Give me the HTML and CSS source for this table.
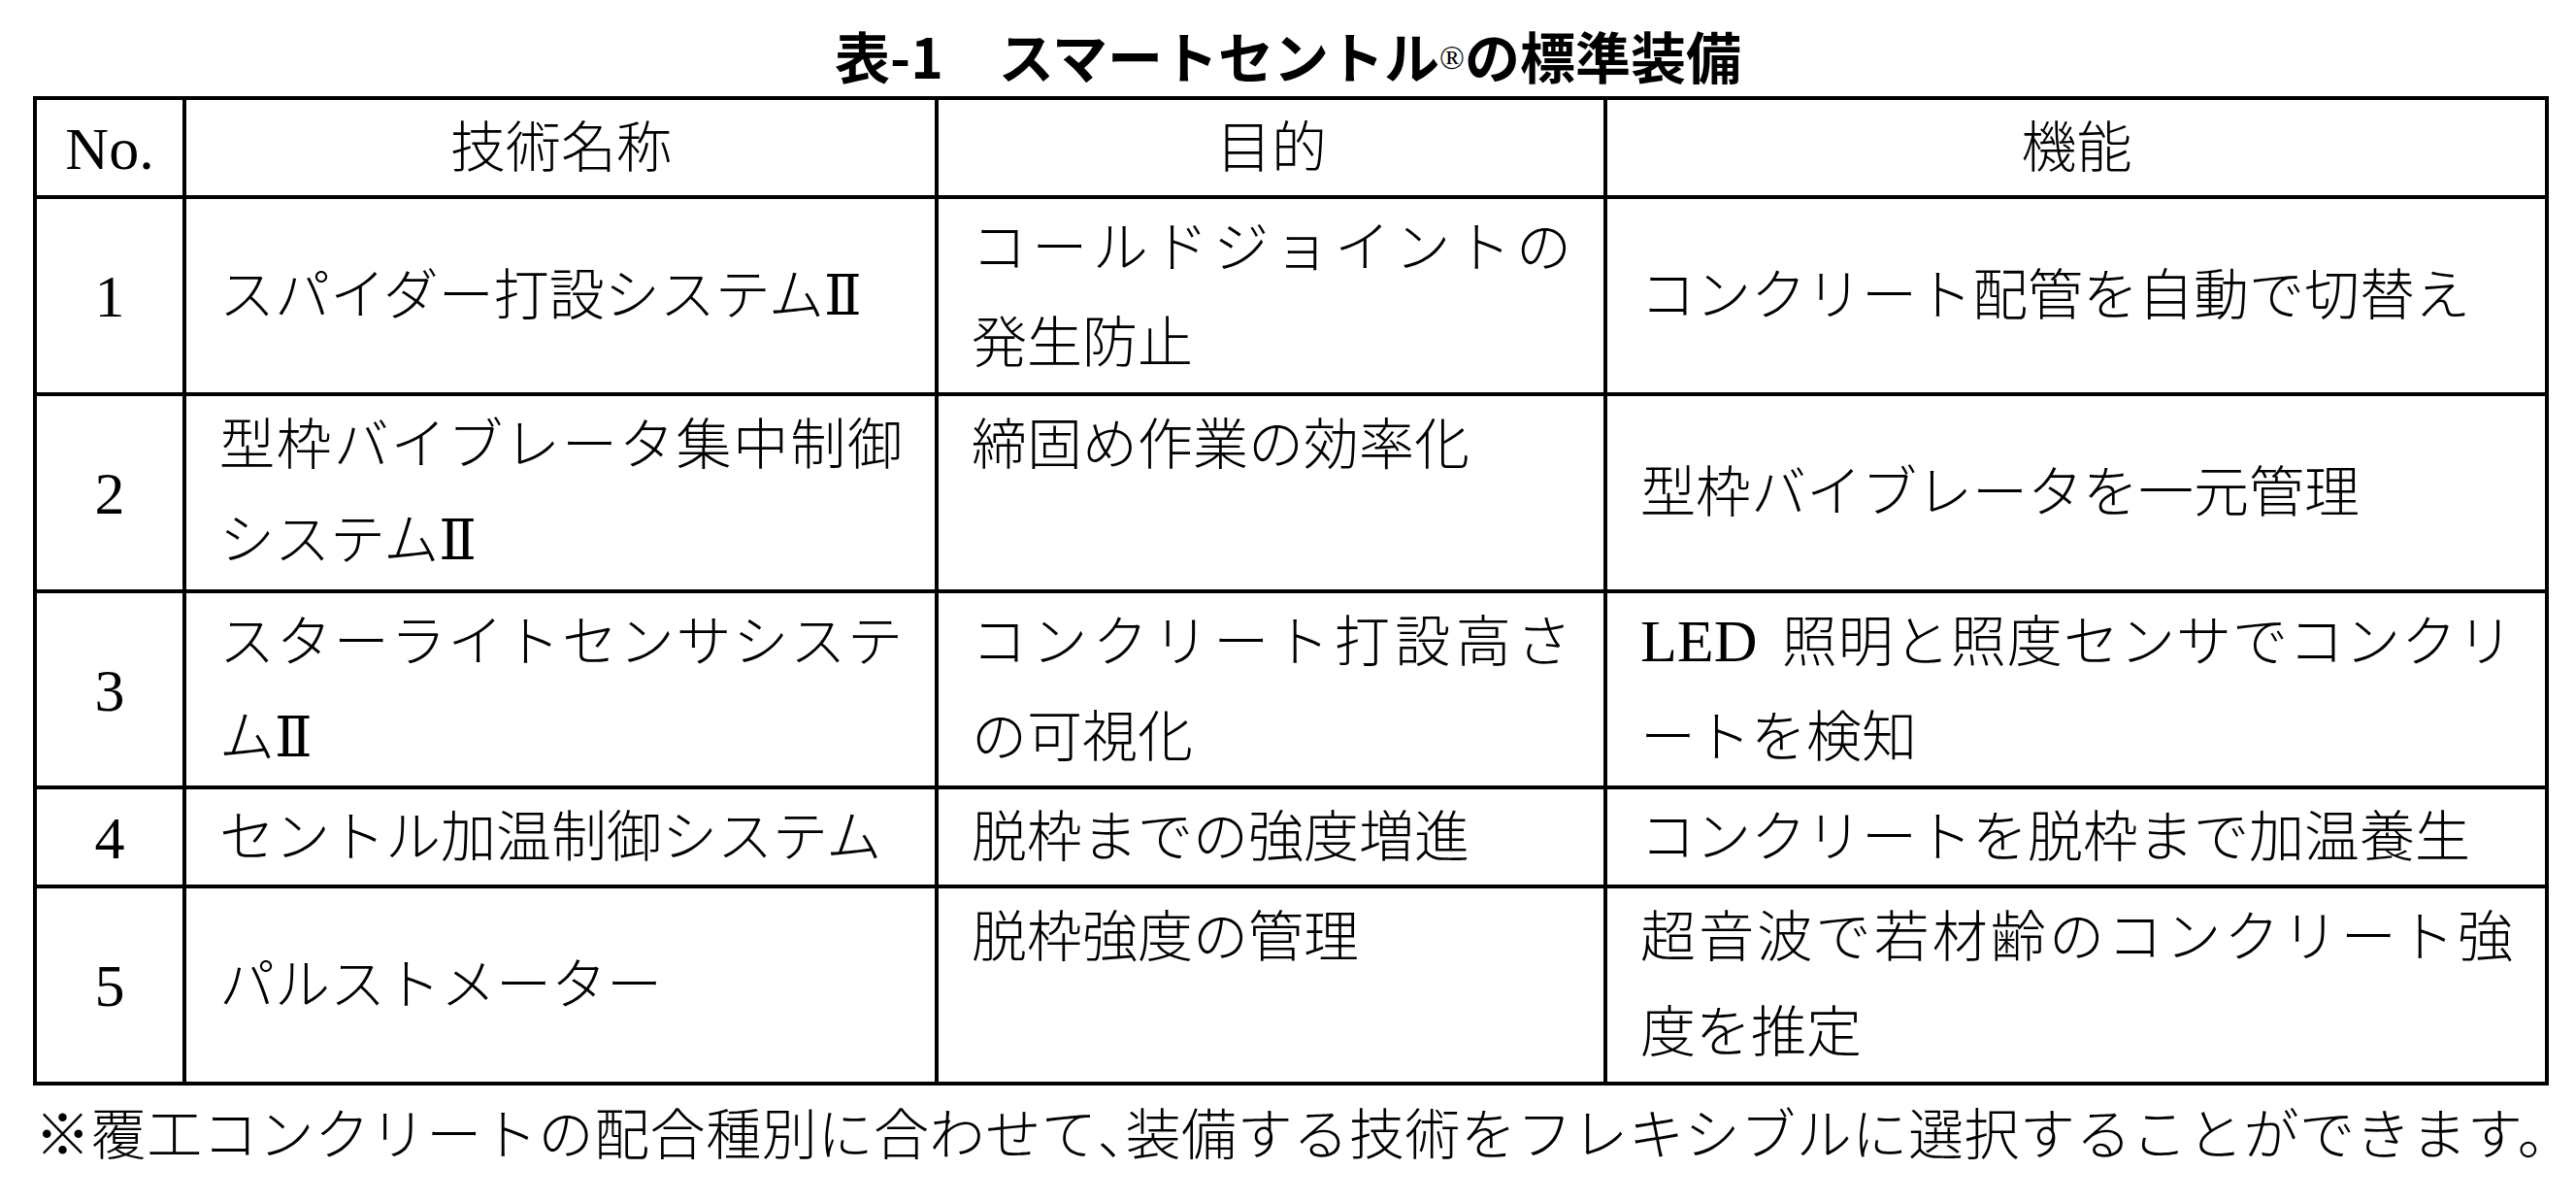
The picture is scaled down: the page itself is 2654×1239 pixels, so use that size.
FILE: index.html
```html
<!DOCTYPE html>
<html lang="ja">
<head>
<meta charset="utf-8">
<title>表-1 スマートセントルの標準装備</title>
<link rel="stylesheet" href="styles.css">
</head>
<body>
<main class="page">
  <h1 class="title">表-1　スマートセントル<span class="reg">®</span>の標準装備</h1>
  <div class="grid">
    <div class="cell head no"><div class="txt">No.</div></div>
    <div class="cell head"><div class="txt">技術名称</div></div>
    <div class="cell head"><div class="txt">目的</div></div>
    <div class="cell head"><div class="txt">機能</div></div>

    <div class="cell no"><div class="txt">1</div></div>
    <div class="cell"><div class="txt">スパイダー打設システムⅡ</div></div>
    <div class="cell"><div class="txt">コールドジョイントの発生防止</div></div>
    <div class="cell"><div class="txt">コンクリート配管を自動で切替え</div></div>

    <div class="cell no"><div class="txt">2</div></div>
    <div class="cell"><div class="txt">型枠バイブレータ集中制御システムⅡ</div></div>
    <div class="cell top"><div class="txt">締固め作業の効率化</div></div>
    <div class="cell"><div class="txt">型枠バイブレータを一元管理</div></div>

    <div class="cell no"><div class="txt">3</div></div>
    <div class="cell"><div class="txt">スターライトセンサシステムⅡ</div></div>
    <div class="cell"><div class="txt">コンクリート打設高さの可視化</div></div>
    <div class="cell"><div class="txt"><span class="lat">LED</span><span> 照明と照度センサでコンクリ</span><span>ートを検知</span></div></div>

    <div class="cell no"><div class="txt">4</div></div>
    <div class="cell"><div class="txt">セントル加温制御システム</div></div>
    <div class="cell"><div class="txt">脱枠までの強度増進</div></div>
    <div class="cell"><div class="txt">コンクリートを脱枠まで加温養生</div></div>

    <div class="cell no"><div class="txt">5</div></div>
    <div class="cell"><div class="txt">パルストメーター</div></div>
    <div class="cell top"><div class="txt">脱枠強度の管理</div></div>
    <div class="cell"><div class="txt">超音波で若材齢のコンクリート強度を推定</div></div>
  </div>
  <p class="note">※覆工コンクリートの配合種別に合わせて<span class="halt">、</span>装備する技術をフレキシブルに選択することができます。</p>
</main>
</body>
</html>
```

FILE: styles.css
```css
html, body {
  margin: 0;
  padding: 0;
  background: #ffffff;
  color: #000000;
}

.page {
  width: 2654px;
  font-family: "Liberation Serif", "Noto Sans CJK JP", sans-serif;
  font-weight: 300;
}

.title {
  margin: 0 0 11px 0;
  padding-top: 24px;
  font-family: "Noto Sans CJK JP", sans-serif;
  font-size: 57px;
  font-weight: 700;
  line-height: 64px;
  text-align: center;
  white-space: nowrap;
}

.title .reg {
  font-family: "Liberation Serif", serif;
  font-weight: 400;
  font-size: 34px;
  vertical-align: 10px;
  line-height: 1;
}

.grid {
  display: grid;
  grid-template-columns: 150px 771px 685px 966px;
  grid-template-rows: 98px 199px 199px 198px 98px 199px;
  gap: 4px;
  padding: 4px;
  margin-left: 34px;
  width: max-content;
  background: #000000;
}

.cell {
  background: #ffffff;
  display: flex;
  flex-direction: column;
  justify-content: center;
  padding: 1px 33px 0 34px;
  font-family: "Liberation Serif", "DejaVu Serif", "Noto Sans CJK JP", serif;
  font-size: 57px;
  line-height: 98px;
  text-align: justify;
  line-break: loose;
}

.cell.top {
  justify-content: flex-start;
  padding-top: 2px;
}

.cell.head {
  text-align: center;
}

.cell.no {
  padding-left: 0;
  padding-right: 0;
  font-size: 62px;
  font-weight: 400;
  text-align: center;
}

.lat {
  font-size: 62px;
  font-weight: 400;
  line-height: 1;
  margin-right: 10px;
}

.note {
  margin: 22px 0 0 36px;
  font-family: "Liberation Serif", "Noto Sans CJK JP", serif;
  font-size: 57px;
  line-height: 60px;
  letter-spacing: 0.6px;
  white-space: nowrap;
}

.halt {
  font-feature-settings: "halt" 1;
}
```
